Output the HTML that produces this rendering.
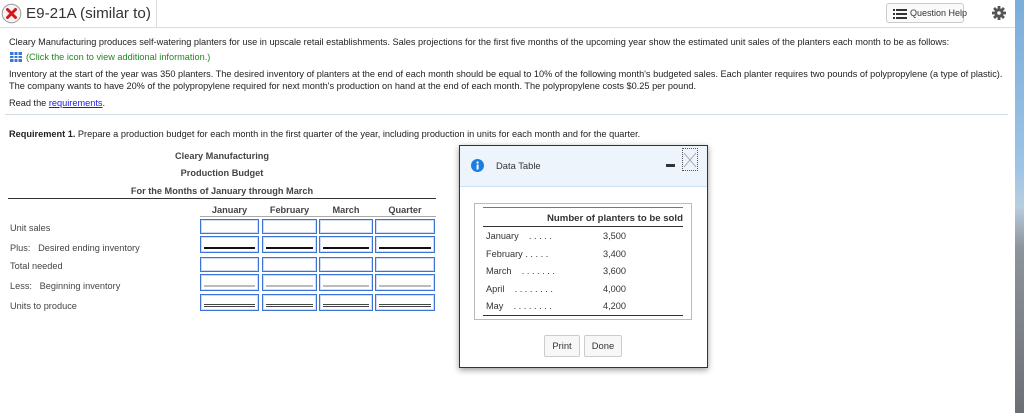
<!DOCTYPE html>
<html><head><style>
*{margin:0;padding:0;box-sizing:border-box}
body{width:1024px;height:413px;overflow:hidden;background:#fff;font-family:"Liberation Sans",sans-serif;color:#222;position:relative}
.a{position:absolute;white-space:nowrap}
.t{font-size:9.2px}
.b{font-weight:bold}
.inp{position:absolute;border:1px solid #3b73d6;box-shadow:inset 0 0 0 1px #cfdcf5;height:15px}
.ul{position:absolute;left:3px;right:3px;bottom:3px}
</style></head><body>
<div class="a" style="left:0;top:0;width:1015px;height:28px;border-bottom:1px solid #dcdcdc"></div>
<div class="a" style="left:156px;top:0;width:1px;height:27px;background:#ddd"></div>
<svg class="a" style="left:1px;top:3px" width="21" height="21" viewBox="0 0 21 21"><circle cx="10.5" cy="10.5" r="9.3" fill="#f4f4f4" stroke="#999" stroke-width="1"/><path d="M6.5 6.5L14.5 14.5M14.5 6.5L6.5 14.5" stroke="#d8141a" stroke-width="3" stroke-linecap="round"/></svg>
<div class="a" style="left:26px;top:5px;font-size:15.2px;color:#333">E9-21A (similar to)</div>
<div class="a" style="left:886px;top:3px;width:78px;height:20px;border:1px solid #ccc;border-radius:3px;background:#fafafa"></div>
<svg class="a" style="left:893px;top:9px" width="14" height="10"><g fill="#333"><rect x="0" y="0" width="2" height="2"/><rect x="3" y="0" width="11" height="2"/><rect x="0" y="4" width="2" height="2"/><rect x="3" y="4" width="11" height="2"/><rect x="0" y="8" width="2" height="2"/><rect x="3" y="8" width="11" height="2"/></g></svg>
<div class="a" style="left:910px;top:8px;font-size:9px;color:#333">Question Help</div>
<svg class="a" style="left:992px;top:6px" width="14" height="14" viewBox="0 0 14 14"><g fill="#555"><circle cx="7" cy="7" r="4.6"/><rect x="5.6" y="0" width="2.8" height="14"/><rect x="0" y="5.6" width="14" height="2.8"/><rect x="5.6" y="0" width="2.8" height="14" transform="rotate(45 7 7)"/><rect x="5.6" y="0" width="2.8" height="14" transform="rotate(-45 7 7)"/></g><circle cx="7" cy="7" r="1.8" fill="#fff"/></svg>
<div class="a" style="left:1015px;top:0;width:9px;height:413px;background:linear-gradient(#7aaedb 0,#9cc4e6 40%,#b8cde0 50%,#8e949c 60%,#6c6f75 100%)"></div>
<div class="a t" style="left:9px;top:37px">Cleary Manufacturing produces self-watering planters for use in upscale retail establishments. Sales projections for the first five months of the upcoming year show the estimated unit sales of the planters each month to be as follows:</div>
<svg class="a" style="left:10px;top:52px" width="12" height="10"><rect x="0" y="0" width="12" height="10" fill="#3a78d6"/><g stroke="#fff" stroke-width="1"><path d="M0 3.5H12M0 6.5H12M4 0V10M8 0V10"/></g></svg>
<div class="a t" style="left:26px;top:52px;color:#1f8a1f">(Click the icon to view additional information.)</div>
<div class="a t" style="left:9px;top:69px">Inventory at the start of the year was 350 planters. The desired inventory of planters at the end of each month should be equal to 10% of the following month's budgeted sales. Each planter requires two pounds of polypropylene (a type of plastic).</div>
<div class="a t" style="left:9px;top:81px">The company wants to have 20% of the polypropylene required for next month's production on hand at the end of each month. The polypropylene costs $0.25 per pound.</div>
<div class="a t" style="left:9px;top:98px">Read the <span style="color:#1a1ae6;text-decoration:underline">requirements</span>.</div>
<div class="a" style="left:5px;top:114px;width:1003px;height:1px;background:#d5dbe3"></div>
<div class="a t" style="left:9px;top:129px"><b>Requirement 1.</b> Prepare a production budget for each month in the first quarter of the year, including production in units for each month and for the quarter.</div>
<div class="a t b" style="left:0;width:444px;text-align:center;top:151px;color:#444">Cleary Manufacturing</div>
<div class="a t b" style="left:0;width:444px;text-align:center;top:168px;color:#444">Production Budget</div>
<div class="a t b" style="left:0;width:444px;text-align:center;top:186px;color:#444">For the Months of January through March</div>
<div class="a" style="left:8px;top:198px;width:428px;height:1px;background:#333"></div>
<div class="a t b" style="left:200px;width:59px;text-align:center;top:205px;color:#444">January</div>
<div class="a t b" style="left:262px;width:55px;text-align:center;top:205px;color:#444">February</div>
<div class="a t b" style="left:319px;width:54px;text-align:center;top:205px;color:#444">March</div>
<div class="a t b" style="left:375px;width:60px;text-align:center;top:205px;color:#444">Quarter</div>
<div class="a" style="left:200px;top:216px;width:236px;height:1px;background:#aaa"></div>
<div class="a t" style="left:10px;top:223px;color:#444">Unit sales</div>
<div class="a t" style="left:10px;top:243px;color:#444">Plus:&nbsp;&nbsp; Desired ending inventory</div>
<div class="a t" style="left:10px;top:261px;color:#444">Total needed</div>
<div class="a t" style="left:10px;top:281px;color:#444">Less:&nbsp;&nbsp; Beginning inventory</div>
<div class="a t" style="left:10px;top:301px;color:#444">Units to produce</div>
<div id="grid"></div>
<script>
var cols=[[200,59],[262,55],[319,54],[375,60]],rows=[[219,''],[236,'2px solid #111'],[257,''],[274,'2px solid #bbb'],[294,'3px double #444']],h='';
rows.forEach(function(r){cols.forEach(function(c){h+='<div class="inp" style="left:'+c[0]+'px;top:'+r[0]+'px;width:'+c[1]+'px;height:'+(r[1]?17:15)+'px">'+(r[1]?'<div class="ul" style="border-bottom:'+r[1]+'"></div>':'')+'</div>';});});
document.getElementById('grid').innerHTML=h;
</script>
<div class="a" style="left:459px;top:145px;width:249px;height:223px;border:1px solid #333;background:#fff;box-shadow:0 2px 6px rgba(0,0,0,.4)"></div>
<div class="a" style="left:460px;top:146px;width:247px;height:41px;background:#eef4fc;border-bottom:1px solid #cfe0f3"></div>
<svg class="a" style="left:471px;top:159px" width="13" height="13"><circle cx="6.5" cy="6.5" r="6.5" fill="#1a7fe0"/><rect x="5.6" y="5.5" width="2" height="5" fill="#fff"/><circle cx="6.6" cy="3.5" r="1.1" fill="#fff"/></svg>
<div class="a" style="left:496px;top:160px;font-size:9.4px;color:#333">Data Table</div>
<div class="a" style="left:666px;top:164px;width:9px;height:3px;background:#333"></div>
<div class="a" style="left:682px;top:148px;width:16px;height:23px;border:1px dotted #555"></div>
<svg class="a" style="left:683px;top:150px" width="14" height="19"><path d="M1 3L13 17M13 3L1 17" stroke="#999" stroke-width=".8"/></svg>
<div class="a" style="left:474px;top:203px;width:218px;height:117px;border:1px solid #bbb"></div>
<div class="a" style="left:483px;top:207px;width:200px;height:1px;background:#777"></div>
<div class="a t b" style="left:547px;top:213px;color:#333;font-size:9.6px">Number of planters to be sold</div>
<div class="a" style="left:483px;top:226px;width:200px;height:1px;background:#333"></div>
<div class="a t" style="left:486px;top:231px;color:#333">January&nbsp;&nbsp;&nbsp; . . . . .</div>
<div class="a t" style="left:486px;top:249px;color:#333">February . . . . .</div>
<div class="a t" style="left:486px;top:266px;color:#333">March&nbsp;&nbsp;&nbsp; . . . . . . .</div>
<div class="a t" style="left:486px;top:284px;color:#333">April&nbsp;&nbsp;&nbsp; . . . . . . . .</div>
<div class="a t" style="left:486px;top:301px;color:#333">May&nbsp;&nbsp;&nbsp; . . . . . . . .</div>
<div class="a t" style="left:603px;top:231px;color:#333">3,500</div>
<div class="a t" style="left:603px;top:249px;color:#333">3,400</div>
<div class="a t" style="left:603px;top:266px;color:#333">3,600</div>
<div class="a t" style="left:603px;top:284px;color:#333">4,000</div>
<div class="a t" style="left:603px;top:301px;color:#333">4,200</div>
<div class="a" style="left:483px;top:315px;width:200px;height:1px;background:#333"></div>
<div class="a" style="left:544px;top:335px;width:36px;height:22px;border:1px solid #ccc;border-radius:2px;background:#f7f7f7;font-size:9.4px;color:#333;text-align:center;line-height:20px">Print</div>
<div class="a" style="left:584px;top:335px;width:38px;height:22px;border:1px solid #ccc;border-radius:2px;background:#f7f7f7;font-size:9.4px;color:#333;text-align:center;line-height:20px">Done</div>
</body></html>
